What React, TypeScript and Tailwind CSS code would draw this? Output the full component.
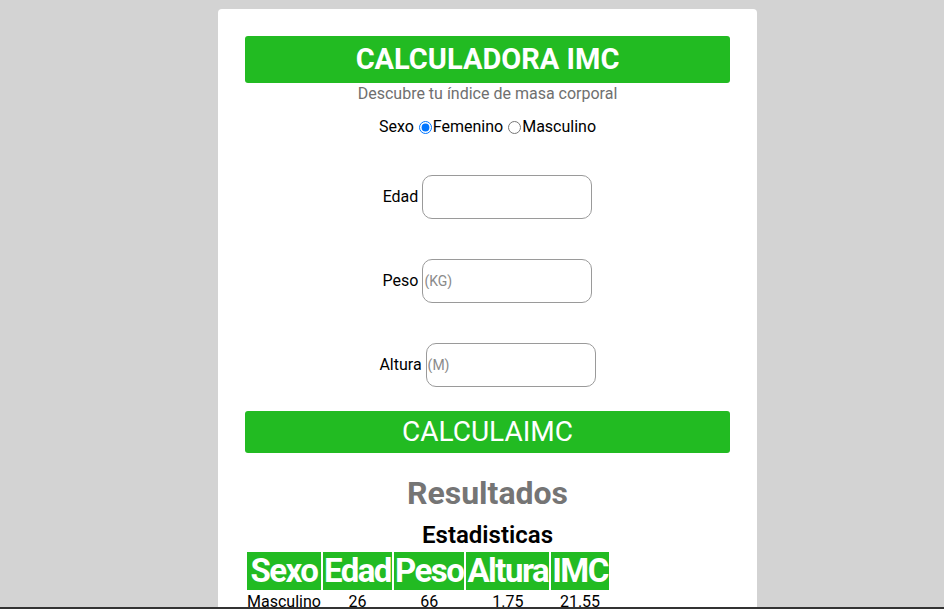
import { useState } from "react";

const font = { fontFamily: "Roboto, 'Noto Sans', sans-serif" };

const stats = [{ sexo: "Masculino", edad: "26", peso: "66", altura: "1.75", imc: "21.55" }];

function Field({ label, placeholder }: { label: string; placeholder?: string }) {
    return (
        <div className="flex items-center justify-center gap-1">
            <label className="text-[16px] text-black">{label}</label>
            <input
                placeholder={placeholder}
                className="w-[170px] h-[44px] rounded-[10px] border border-[#9a9a9a] px-[1px] text-[14px] placeholder:text-[#8a8a8a] outline-none"
            />
        </div>
    );
}

export default function App() {
    const [sexo, setSexo] = useState("f");

    return (
        <div className="min-h-[609px] bg-[#d3d3d3] pt-[9px]" style={font}>
            <div className="ml-[218px] w-[539px] rounded-[4px] bg-white px-[27px] pt-[27px] pb-10">
                <h1 className="flex h-[47px] items-center justify-center rounded-[3px] bg-[#22bb22] text-[29px] font-bold text-white">
                    CALCULADORA IMC
                </h1>
                <p className="mt-[-1px] text-center text-[16px] text-[#6f6f6f]">
                    Descubre tu índice de masa corporal
                </p>

                <div className="mt-[9px] flex items-center justify-center text-[16px] text-black">
                    <span>Sexo</span>
                    <input
                        type="radio"
                        checked={sexo === "f"}
                        onChange={() => setSexo("f")}
                        className="ml-[5px] mr-[1px] h-[13px] w-[13px]"
                    />
                    <span>Femenino</span>
                    <input
                        type="radio"
                        checked={sexo === "m"}
                        onChange={() => setSexo("m")}
                        className="ml-[5px] mr-[1px] h-[13px] w-[13px]"
                    />
                    <span>Masculino</span>
                </div>

                <div className="mt-[36px] flex flex-col gap-[40px]">
                    <Field label="Edad" />
                    <Field label="Peso" placeholder="(KG)" />
                    <Field label="Altura" placeholder="(M)" />
                </div>

                <button className="mt-[24px] flex h-[42px] w-full items-center justify-center rounded-[3px] bg-[#22bb22] text-[28px] text-white">
                    CALCULAIMC
                </button>

                <h2 className="mt-[16px] text-center text-[32px] font-bold text-[#757575]">Resultados</h2>
                <h3 className="mt-0 text-center text-[24px] font-semibold text-black">Estadisticas</h3>

                <table className="-mt-[3px] border-separate border-spacing-[2px]">
                    <thead>
                        <tr>
                            {["Sexo", "Edad", "Peso", "Altura", "IMC"].map((h) => (
                                <th
                                    key={h}
                                    className="bg-[#22bb22] px-[1px] text-[33px] leading-[38px] font-bold tracking-[-1.5px] text-white"
                                >
                                    {h}
                                </th>
                            ))}
                        </tr>
                    </thead>
                    <tbody>
                        {stats.map((s) => (
                            <tr key={s.sexo} className="text-center text-[16px] leading-[20px] text-black">
                                <td>{s.sexo}</td>
                                <td>{s.edad}</td>
                                <td>{s.peso}</td>
                                <td>{s.altura}</td>
                                <td>{s.imc}</td>
                            </tr>
                        ))}
                    </tbody>
                </table>
            </div>
            <div className="fixed bottom-0 left-0 h-[2px] w-full bg-[#333]" />
        </div>
    );
}
